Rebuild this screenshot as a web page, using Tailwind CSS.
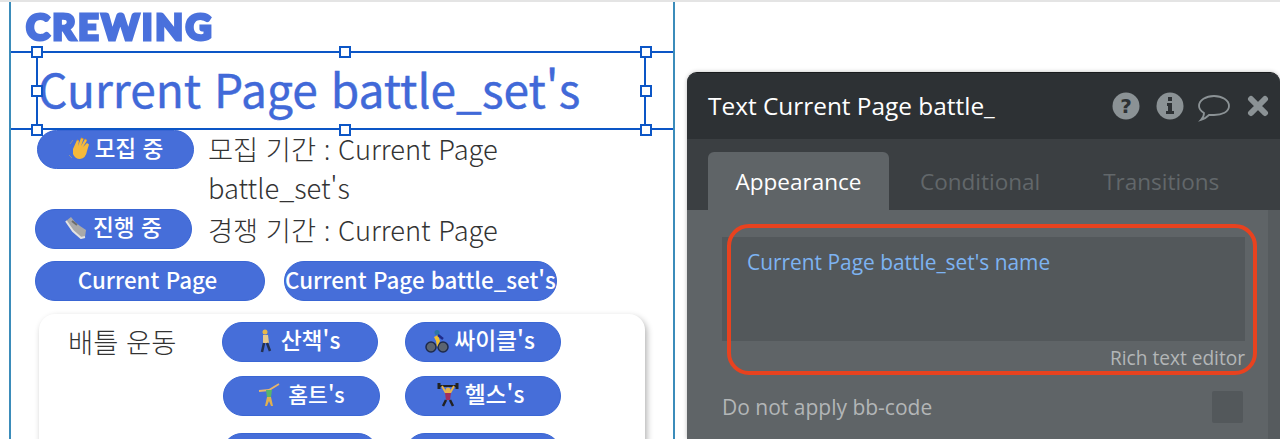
<!DOCTYPE html>
<html lang="ko">
<head>
  <meta charset="UTF-8" />
  <title>Crewing editor</title>
  <script src="https://cdn.jsdelivr.net/npm/@tailwindcss/browser@4"></script>
</head>
<body class="bg-white overflow-hidden font-['Noto_Sans_CJK_KR','Noto_Sans',sans-serif]">
  <div class="relative w-[1280px] h-[439px] overflow-hidden border-t-2 border-[#e4e4e4] flex items-start">

    <!-- page canvas -->
    <div class="ml-[9px] w-[666px] h-[437px] shrink-0 border-x-2 border-[#3b8cba] overflow-hidden">
      <div class="h-[49px] pl-[15px] pt-[5px]">
        <span class="block text-[36px] leading-[38px] font-black tracking-[2.500px] text-[#4a71dc] font-['Lato',sans-serif] [-webkit-text-stroke:3px_#4a71dc] blur-[0.5px]">CREWING</span>
      </div>

      <!-- selected text element -->
      <div class="relative h-[79px] border-y-2 border-[#0c56c6]">
        <div class="absolute left-[25px] top-[-2px] w-[610px] h-[79px] border-x-2 border-[#0c56c6]"></div>
        <p class="pl-[27px] text-[#4169d8] text-[46.100px] leading-[70px] whitespace-nowrap [-webkit-text-stroke:0.4px_#4169d8]">Current Page battle_set's</p>
        <span class="absolute left-[20px] top-[-7px] w-[12px] h-[12px] bg-white border-2 border-[#0c56c6]"></span>
        <span class="absolute left-[328px] top-[-7px] w-[12px] h-[12px] bg-white border-2 border-[#0c56c6]"></span>
        <span class="absolute left-[629px] top-[-7px] w-[12px] h-[12px] bg-white border-2 border-[#0c56c6]"></span>
        <span class="absolute left-[20px] top-[32px] w-[12px] h-[12px] bg-white border-2 border-[#0c56c6]"></span>
        <span class="absolute left-[629px] top-[32px] w-[12px] h-[12px] bg-white border-2 border-[#0c56c6]"></span>
        <span class="absolute left-[20px] top-[71px] w-[12px] h-[12px] bg-white border-2 border-[#0c56c6]"></span>
        <span class="absolute left-[328px] top-[71px] w-[12px] h-[12px] bg-white border-2 border-[#0c56c6]"></span>
        <span class="absolute left-[629px] top-[71px] w-[12px] h-[12px] bg-white border-2 border-[#0c56c6]"></span>
      </div>

      <div class="flex items-start h-[78px] pl-[26px]">
        <button class="w-[157px] h-[39px] pb-[3px] rounded-[20px] bg-[#466ed9] border border-[#3a66d4] text-white text-[22.700px] font-medium flex items-center justify-center gap-[3px]">
          <svg width="24" height="24" viewBox="0 0 24 24"><path d="M5 13 L9 4 L11 5 L10 10 L13 2 L15.500 3 L13 10 L17 3 L19 4.500 L15 11 L19 7 L21 8.500 L19 15 Q18 22 12 23 Q7 23 5 18Z" fill="#f6b93b"/><path d="M9 4 L11 5 M13 2 L15.500 3 M17 3 L19 4.500" stroke="#e39a1f" stroke-width="1"/><path d="M2 8 L5 4 M1 19 L4 22" stroke="#8d9097" stroke-width="1"/></svg>
          <span>모집 중</span>
        </button>
        <div class="ml-[14px] -mt-[1px] text-[27.300px] leading-[39px] font-light text-[#333] whitespace-nowrap">
          <p>모집 기간 <span class="inline-block font-['Noto_Sans',sans-serif] leading-none">:</span> Current Page</p>
          <p>battle_set's</p>
        </div>
      </div>

      <div class="flex items-start h-[52px] pl-[24px] mt-[1px]">
        <button class="w-[157px] h-[40px] pb-[3px] rounded-[20px] bg-[#466ed9] border border-[#3a66d4] text-white text-[22.700px] font-medium flex items-center justify-center gap-[6px]">
          <svg width="22" height="23" viewBox="0 0 22 23"><path d="M1 5 L6 1 L10 6 L15 10 L21 14 L20 21 L16 22 L8 15Z" fill="#a9a9a9"/><path d="M1 5 L8 15 L16 22 L20 21" fill="none" stroke="#e3e3e3" stroke-width="2"/><path d="M7 5 L12 9" stroke="#6c6c6c" stroke-width="2"/></svg>
          <span>진행 중</span>
        </button>
        <p class="ml-[16px] text-[27.300px] leading-[40px] font-light text-[#333] whitespace-nowrap">경쟁 기간 <span class="inline-block font-['Noto_Sans',sans-serif] leading-none">:</span> Current Page</p>
      </div>

      <div class="flex pl-[24px] gap-[19px]">
        <button class="w-[230px] h-[40px] pb-[3px] pr-[5px] rounded-[20px] bg-[#466ed9] border border-[#3a66d4] text-white text-[22.400px] font-medium">Current Page</button>
        <button class="w-[273px] h-[40px] pb-[3px] pr-[2px] rounded-[20px] bg-[#466ed9] border border-[#3a66d4] text-white text-[22.400px] font-medium whitespace-nowrap">Current Page battle_set's</button>
      </div>

      <!-- battle exercise card -->
      <div class="ml-[28px] mt-[13px] w-[606px] h-[200px] rounded-[16px] bg-white shadow-[2px_3px_6px_rgba(0,0,0,0.3)] relative pt-[8px]">
        <div class="flex">
          <p class="pl-[29px] w-[183px] text-[27.400px] leading-[38px] font-light text-[#333] whitespace-nowrap">배틀 운동</p>
          <div class="flex flex-col">
            <div class="flex gap-[27px]">
              <button class="w-[156px] h-[40px] pb-[3px] rounded-[20px] bg-[#466ed9] border border-[#3a66d4] text-white text-[22.800px] font-medium flex items-center justify-center gap-[9px]">
                <svg width="12" height="24" viewBox="0 0 12 24"><circle cx="5" cy="3" r="2.500" fill="#e9b84a"/><path d="M3 6 H8 L9 14 H3Z" fill="#e8c98a"/><path d="M4 14 L2 23 M7 14 L10 22" stroke="#24304f" stroke-width="2.500" fill="none"/></svg>
                <span>산책's</span>
              </button>
              <button class="w-[156px] h-[40px] pb-[3px] pr-[6px] rounded-[20px] bg-[#466ed9] border border-[#3a66d4] text-white text-[22.800px] font-medium flex items-center justify-center gap-[5px]">
                <svg width="24" height="24" viewBox="0 0 24 24"><circle cx="6" cy="18" r="5" fill="#5b6470" stroke="#1e2a4a" stroke-width="1.500"/><circle cx="18" cy="18" r="5" fill="#5b6470" stroke="#1e2a4a" stroke-width="1.500"/><circle cx="12" cy="3.500" r="2.500" fill="#2c76a8"/><path d="M9 8 L13 6 L15 12 L12 18 L11 12Z" fill="#f2c12e"/><path d="M13 6 L18 10" stroke="#1e2a8a" stroke-width="2.500"/></svg>
                <span>싸이클's</span>
              </button>
            </div>
            <div class="flex gap-[25px] mt-[14px] ml-[1px]">
              <button class="w-[157px] h-[40px] pb-[3px] rounded-[20px] bg-[#466ed9] border border-[#3a66d4] text-white text-[21.500px] font-medium flex items-center justify-center gap-[8px]">
                <svg width="22" height="24" viewBox="0 0 22 24"><path d="M1 8 L11 7 L21 1" stroke="#e8b56c" stroke-width="1.800" fill="none"/><path d="M8 7 H14 L13 14 H9Z" fill="#58b56a"/><path d="M9 14 H13 L15 23 H13 L11 18 L9 23 H7Z" fill="#e0b050"/></svg>
                <span>홈트's</span>
              </button>
              <button class="w-[156px] h-[40px] pb-[3px] pr-[5px] rounded-[20px] bg-[#466ed9] border border-[#3a66d4] text-white text-[22.800px] font-medium flex items-center justify-center gap-[6px]">
                <svg width="22" height="24" viewBox="0 0 22 24"><path d="M1 3 H21" stroke="#222" stroke-width="2"/><path d="M2 0 V6 M20 0 V6" stroke="#222" stroke-width="3"/><path d="M5 3 L9 10 H13 L17 3" stroke="#e8b34a" stroke-width="2" fill="none"/><circle cx="11" cy="7" r="2.500" fill="#e8b34a"/><path d="M8 10 H14 L13 17 H9Z" fill="#a12f5e"/><path d="M9 17 L6 23 M13 17 L16 23" stroke="#222" stroke-width="2.500"/></svg>
                <span>헬스's</span>
              </button>
            </div>
            <div class="flex gap-[27px] mt-[17px]">
              <div class="w-[156px] h-[40px] rounded-[20px] bg-[#466ed9] border border-[#3a66d4]"></div>
              <div class="w-[156px] h-[40px] rounded-[20px] bg-[#466ed9] border border-[#3a66d4]"></div>
            </div>
          </div>
        </div>
      </div>
    </div>

    <!-- property editor -->
    <div class="ml-[12px] mt-[70px] w-[593px] h-[367px] shrink-0 rounded-t-[10px] overflow-hidden border-t border-[#1a1c1e] shadow-[0_0_4px_rgba(0,0,0,0.25)] bg-[#5f6467] font-['Open_Sans',sans-serif] relative">
      <div class="h-[66px] bg-[#2d3134] flex items-center pl-[21px] pr-[11px]">
        <h2 class="text-white text-[24.400px] leading-[66px] whitespace-nowrap">Text Current Page battle_</h2>
        <div class="ml-auto flex items-center">
          <svg width="28" height="28" viewBox="0 0 28 28"><circle cx="14" cy="14" r="13.500" fill="#8b9295"/><text x="14" y="21" text-anchor="middle" font-family="'DejaVu Sans',sans-serif" font-weight="700" font-size="20" fill="#2d3134">?</text></svg>
          <svg class="ml-[16px]" width="28" height="28" viewBox="0 0 28 28"><circle cx="14" cy="14" r="13.500" fill="#8b9295"/><path d="M11 11 H16 V19 H18 V22 H10 V19 H12 V14 H11Z M12 5 H16 V9 H12Z" fill="#2d3134"/></svg>
          <svg class="ml-[14px] mt-[4px]" width="32" height="28" viewBox="0 0 32 28"><path d="M16 2 C24 2 31 6 31 12 C31 18 24 21 16 21 C14 21 13 21 11 21 C9 23 7 25 3 26 C5 24 6 22 6 19 C3 17 1 15 1 12 C1 6 8 2 16 2Z" fill="none" stroke="#8b9295" stroke-width="1.800"/></svg>
          <svg class="ml-[17px]" width="22" height="22" viewBox="0 0 22 22"><path d="M4 4 L18 18 M18 4 L4 18" stroke="#8b9295" stroke-width="6" stroke-linecap="round"/></svg>
        </div>
      </div>

      <div class="h-[71px] bg-[#3b3f42] flex items-end pl-[21px]">
        <div class="w-[181px] h-[58px] rounded-t-[6px] bg-[#5f6467] text-white text-[22.500px] leading-[60px] text-center">Appearance</div>
        <div class="ml-[31px] h-[58px] leading-[60px] text-[22.500px] text-[#62676a]">Conditional</div>
        <div class="ml-[63px] h-[58px] leading-[60px] text-[22.500px] text-[#62676a]">Transitions</div>
      </div>

      <div class="pl-[35px] pr-[35px] pt-[27px]">
        <div class="w-[523px] h-[104px] bg-[#53585b] px-[25px] pt-[10px]">
          <p class="text-[20.900px] leading-[30px] text-[#7db3f2]">Current Page battle_set's name</p>
        </div>
        <p class="w-[523px] text-right text-[19.100px] leading-[34px] text-[#b3b6b7]">Rich text editor</p>
        <div class="w-[521px] flex items-center justify-between mt-[15px]">
          <span class="text-[21px] leading-[32px] pt-[1px] text-[#b3b6b7]">Do not apply bb-code</span>
          <span class="w-[31px] h-[32px] bg-[#53585b] rounded-[2px]"></span>
        </div>
      </div>

      <!-- callout and scroll strip -->
      <div class="absolute left-[40px] top-[151px] w-[530px] h-[151px] border-[4px] border-[#e8421f] rounded-[22px]"></div>
      <div class="absolute right-0 top-[137px] bottom-0 w-[12px] bg-[#565b5e]"></div>
    </div>
  </div>
</body>
</html>
